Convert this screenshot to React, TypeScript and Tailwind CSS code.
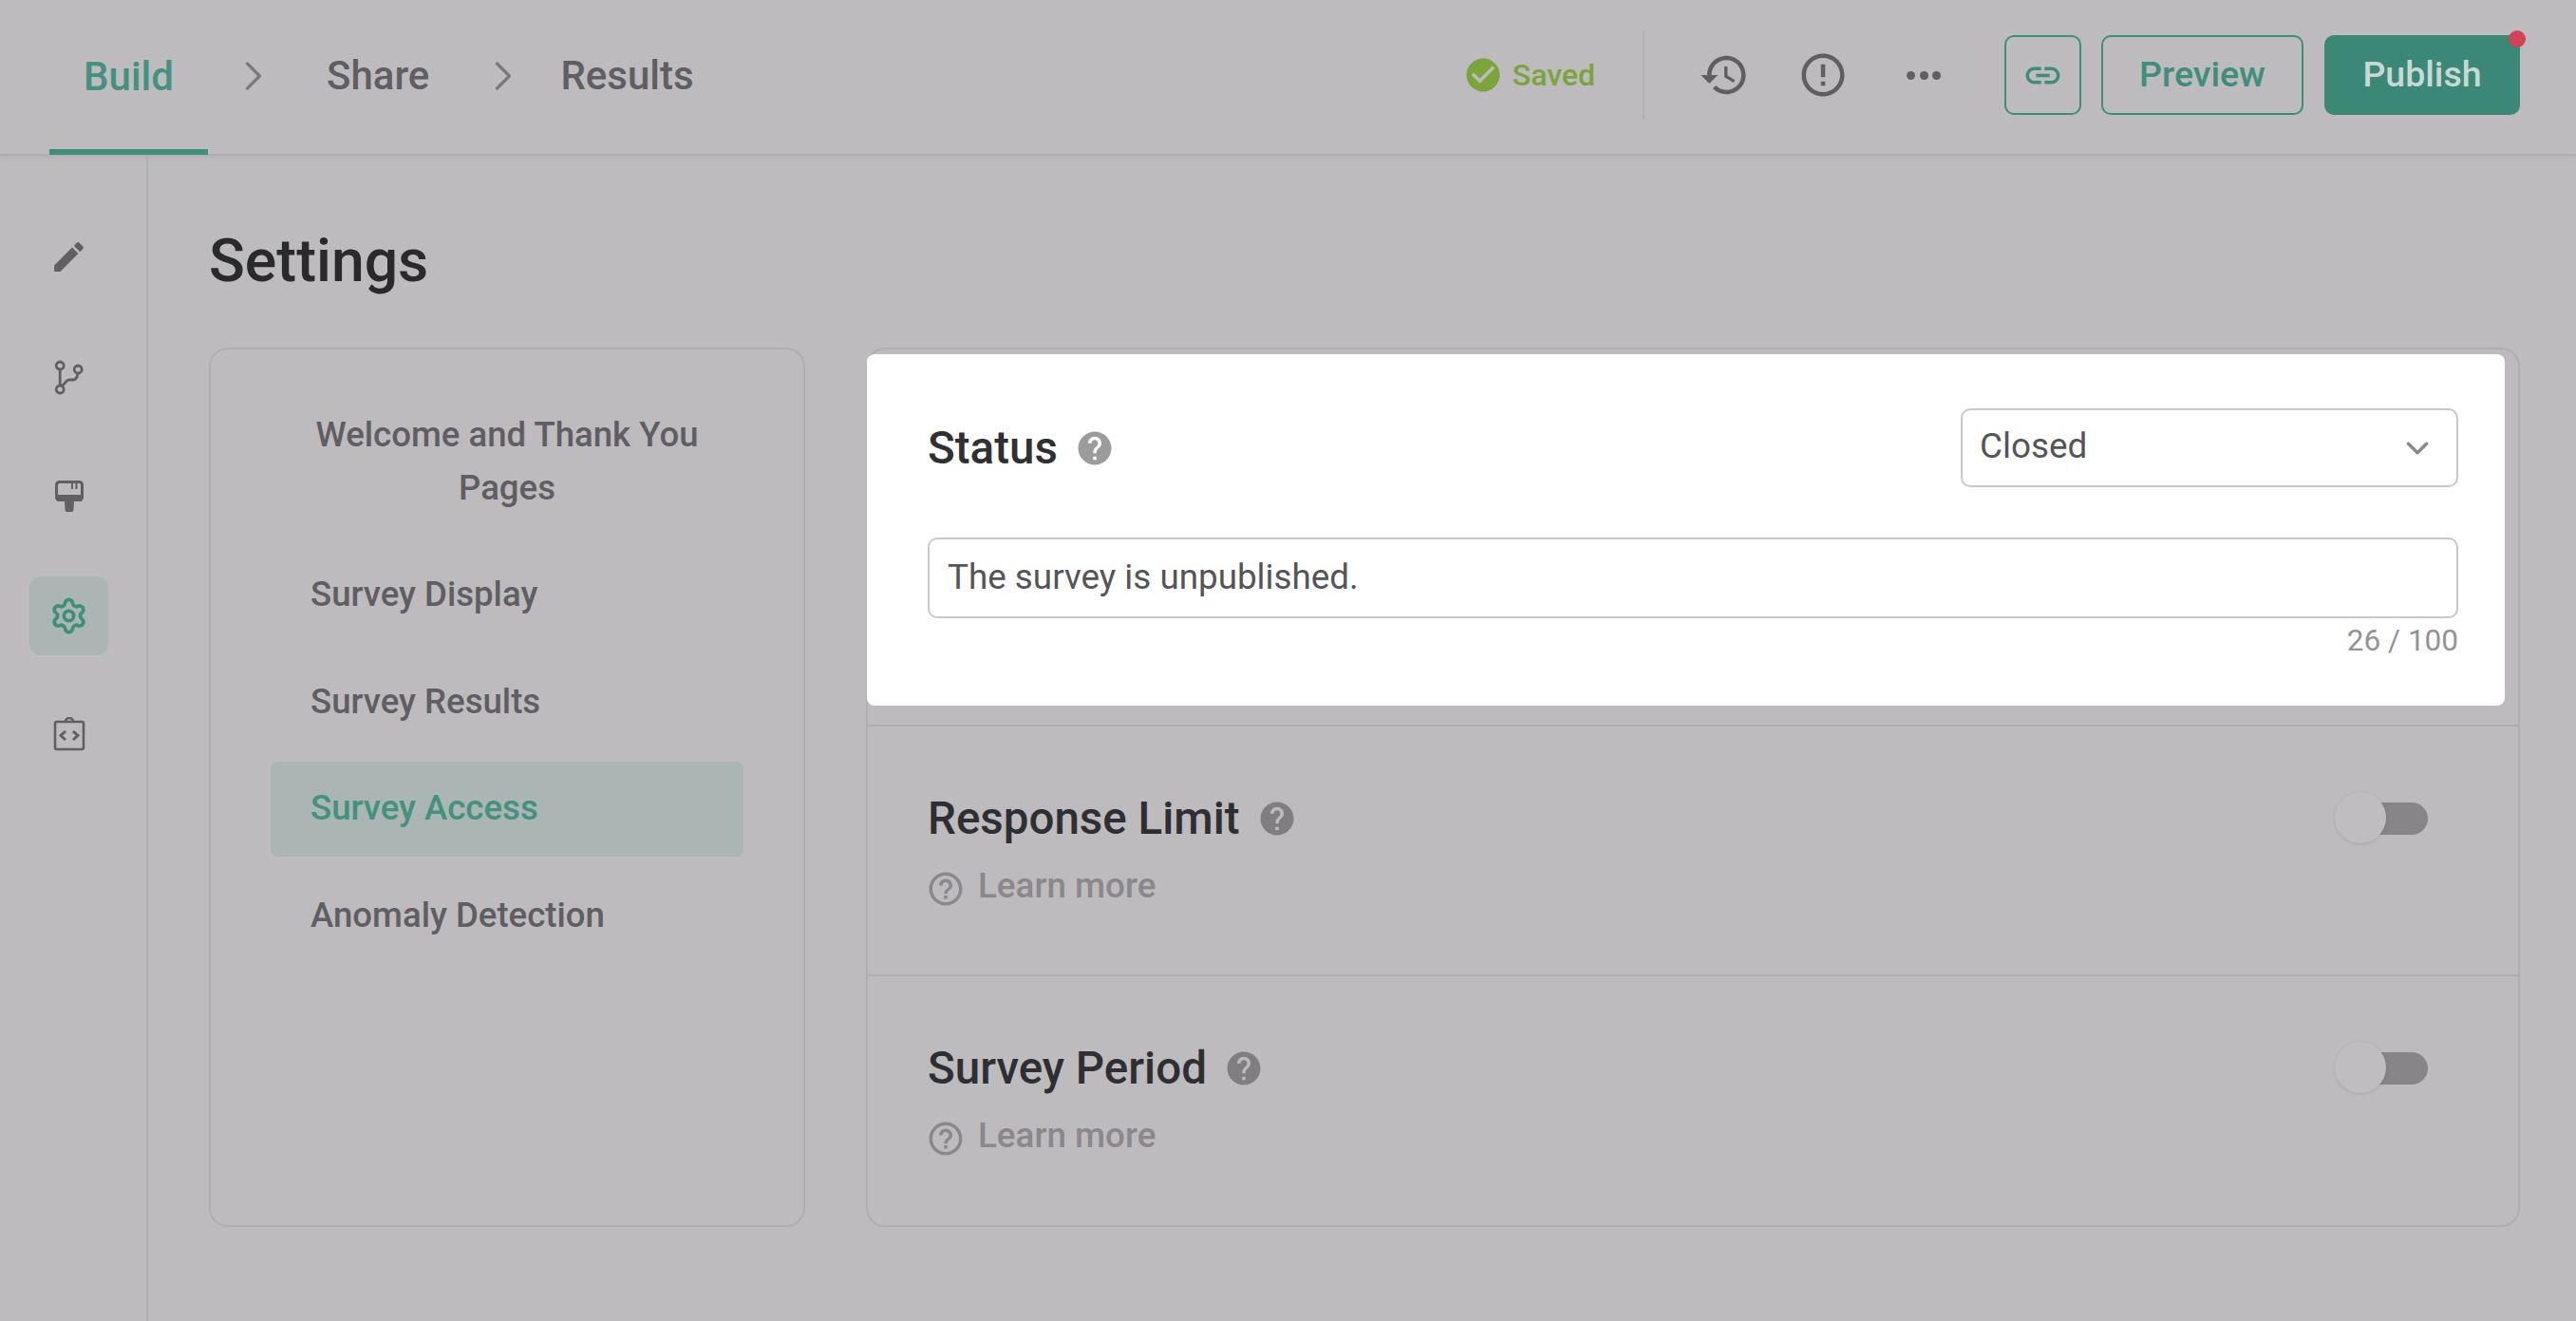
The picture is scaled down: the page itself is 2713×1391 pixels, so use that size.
import { ChevronDown, ChevronRight, Settings } from "lucide-react"

const MUI = {
  edit: "M3 17.25V21h3.75L17.81 9.94l-3.75-3.75L3 17.25zM20.71 7.04c.39-.39.39-1.02 0-1.41l-2.34-2.34c-.39-.39-1.02-.39-1.41 0l-1.83 1.83 3.75 3.75 1.83-1.83z",
  history: "M13 3c-4.97 0-9 4.03-9 9H1l3.89 3.89.07.14L9 12H6c0-3.87 3.13-7 7-7s7 3.13 7 7-3.13 7-7 7c-1.93 0-3.68-.79-4.94-2.06l-1.42 1.42C8.27 19.99 10.51 21 13 21c4.97 0 9-4.03 9-9s-4.03-9-9-9zm-1 5v5l4.28 2.54.72-1.21-3.5-2.08V8H12z",
  alert: "M11 15h2v2h-2zm0-8h2v6h-2zm.99-5C6.47 2 2 6.48 2 12s4.47 10 9.99 10C17.52 22 22 17.52 22 12S17.52 2 11.99 2zM12 20c-4.42 0-8-3.58-8-8s3.58-8 8-8 8 3.58 8 8-3.58 8-8 8z",
  check: "M12 2C6.48 2 2 6.48 2 12s4.48 10 10 10 10-4.48 10-10S17.52 2 12 2zm-2 15l-5-5 1.41-1.41L10 14.17l7.59-7.59L19 8l-9 9z",
  link: "M3.9 12c0-1.71 1.39-3.1 3.1-3.1h4V7H7c-2.76 0-5 2.24-5 5s2.24 5 5 5h4v-1.9H7c-1.71 0-3.1-1.39-3.1-3.1zM8 13h8v-2H8v2zm9-6h-4v1.9h4c1.71 0 3.1 1.39 3.1 3.1s-1.39 3.1-3.1 3.1h-4V17h4c2.76 0 5-2.24 5-5s-2.24-5-5-5z",
  help: "M12 2C6.48 2 2 6.48 2 12s4.48 10 10 10 10-4.48 10-10S17.52 2 12 2zm1 17h-2v-2h2v2zm2.07-7.75l-.9.92C13.45 12.9 13 13.5 13 15h-2v-.5c0-1.1.45-2.1 1.17-2.83l1.24-1.26c.37-.36.59-.86.59-1.41 0-1.1-.9-2-2-2s-2 .9-2 2H8c0-2.21 1.79-4 4-4s4 1.79 4 4c0 .88-.36 1.68-.93 2.25z",
  helpOutline: "M11 18h2v-2h-2v2zm1-16C6.48 2 2 6.48 2 12s4.48 10 10 10 10-4.48 10-10S17.52 2 12 2zm0 18c-4.41 0-8-3.59-8-8s3.59-8 8-8 8 3.59 8 8-3.59 8-8 8zm0-14c-2.21 0-4 1.79-4 4h2c0-1.1.9-2 2-2s2 .9 2 2c0 2-3 1.75-3 5h2c0-2.25 3-2.5 3-5 0-2.21-1.79-4-4-4z",
}

const Icon = ({ d, size, className }: { d: string; size: number; className?: string }) => (
  <svg width={size} height={size} viewBox="0 0 24 24" fill="currentColor" className={className}>
    <path d={d} fillRule="evenodd" />
  </svg>
)

const BranchIcon = () => (
  <svg width="34" height="38" viewBox="0 0 34 38" fill="none" stroke="#605f63" strokeWidth="2.8">
    <circle cx="7.2" cy="7" r="4" />
    <circle cx="7.2" cy="32" r="4" />
    <circle cx="26.2" cy="11" r="4" />
    <path d="M7.2 11v17M9 29l5-5.5c1-1 2-1.5 3-1.5h4c2.5 0 4.5-3 5-7" />
  </svg>
)

const BrushIcon = () => (
  <svg width="30" height="33" viewBox="0 0 30 33" className="text-[#605f63]">
    <rect x="1.5" y="1.5" width="27" height="19" rx="3" fill="none" stroke="currentColor" strokeWidth="3" />
    <path d="M1.5 15h27v5a2 2 0 0 1-2 2h-23a2 2 0 0 1-2-2z" fill="currentColor" />
    <path d="M17 2h2v7h-2zM21.5 2h2v7h-2z" fill="currentColor" />
    <path d="M10 22h10l-.6 9a2 2 0 0 1-2 2h-4.800a2 2 0 0 1-2-2z" fill="currentColor" />
  </svg>
)

const CodeIcon = () => (
  <svg width="34" height="36" viewBox="0 0 34 36" fill="none" stroke="#605f63" strokeWidth="2.6" className="mb-[3px]">
    <rect x="2" y="5" width="30" height="29" rx="2" />
    <path d="M13 5a4 4 0 0 1 8 0" />
    <path d="M13 15l-5 4.500 5 4.500M21 15l5 4.500-5 4.500" strokeWidth="3" />
  </svg>
)

const Toggle = () => (
  <div className="relative flex h-[56px] w-[98px] items-center justify-end">
    <div className="h-[34px] w-[80px] rounded-full bg-[#878588]" />
    <div className="absolute left-0 top-0 h-[54px] w-[54px] rounded-full bg-[#bfbdc0] shadow-[0_1px_4px_rgba(0,0,0,0.1)]" />
  </div>
)

const LimitRow = ({ title, last }: { title: string; last?: boolean }) => (
  <div className={`h-[263px] pl-[63px] pr-[95px] pt-[67px] ${last ? "" : "border-b-2 border-[#afadb0]"}`}>
    <div className="flex h-[60px] items-center justify-between">
      <div className="flex items-center">
        <span className="text-[47.5px] font-medium leading-[60px] text-[#2f2e32]">{title}</span>
        <Icon d={MUI.help} size={42} className="ml-[18px] text-[#807e81]" />
      </div>
      <Toggle />
    </div>
    <div className="mt-[16px] flex h-[50px] items-center">
      <Icon d={MUI.helpOutline} size={42} className="ml-[-2px] mt-[5px] text-[#8a888b]" />
      <span className="ml-[13px] text-[36.8px] font-medium leading-[50px] text-[#8a888b]">Learn more</span>
    </div>
  </div>
)

const navItems = ["Survey Display", "Survey Results", "Survey Access", "Anomaly Detection"]

export default function App() {
  return (
    <div className="flex h-[1391px] w-full flex-col overflow-hidden bg-[#bdbbbe] font-['Roboto',sans-serif]">
      <header className="flex h-[164px] shrink-0 items-stretch border-b-2 border-[#b0aeb1] pl-[52px] pr-[59px] shadow-[0_2px_5px_rgba(0,0,0,0.05)]">
        <div className="flex h-[163px] w-[167px] items-center justify-center border-b-[6px] border-[#3f8d7b] pt-[4px] text-[42px] font-medium text-[#45917f]">
          Build
        </div>
        <div className="flex items-center pb-[3px] text-[42px] font-medium text-[#5f5e62]">
          <ChevronRight size={52} strokeWidth={1.5} className="ml-[22px] text-[#7b797d]" />
          <span className="ml-[51px]">Share</span>
          <ChevronRight size={52} strokeWidth={1.5} className="ml-[52px] text-[#7b797d]" />
          <span className="ml-[34px]">Results</span>
        </div>
        <div className="ml-auto flex items-center pb-[4px]">
          <Icon d={MUI.check} size={42} className="text-[#7ba43c]" />
          <span className="ml-[10px] text-[32px] font-medium text-[#7ba43c]">Saved</span>
          <div className="ml-[50px] h-[94px] w-[2px] bg-[#b3b1b4]" />
          <Icon d={MUI.history} size={54} className="ml-[57px] text-[#5f5e62]" />
          <Icon d={MUI.alert} size={54} className="ml-[50px] text-[#5f5e62]" />
          <div className="ml-[61px] flex w-[36px] justify-between">
            <span className="h-[9px] w-[9px] rounded-full bg-[#5f5e62]" />
            <span className="h-[9px] w-[9px] rounded-full bg-[#5f5e62]" />
            <span className="h-[9px] w-[9px] rounded-full bg-[#5f5e62]" />
          </div>
          <div className="ml-[67px] flex h-[84px] w-[81px] items-center justify-center rounded-[10px] border-2 border-[#3f8d7b]">
            <Icon d={MUI.link} size={43} className="text-[#3f8d7b]" />
          </div>
          <div className="ml-[21px] flex h-[84px] w-[213px] items-center justify-center rounded-[10px] border-2 border-[#3f8d7b] pb-[2px] text-[37.5px] font-medium text-[#3f8d7b]">
            Preview
          </div>
          <div className="relative ml-[22px] flex h-[84px] w-[206px] items-center justify-center rounded-[10px] bg-[#3c8877] pb-[2px] text-[37.5px] font-medium text-[#c8d9d5]">
            Publish
            <span className="absolute right-[-6px] top-[-5px] h-[18px] w-[18px] rounded-full bg-[#d2435a]" />
          </div>
        </div>
      </header>

      <div className="flex flex-1">
        <aside className="flex w-[156px] shrink-0 flex-col gap-[43px] border-r-2 border-[#afadb0] pl-[31px] pt-[65px]">
          <div className="flex h-[83px] w-[83px] items-center justify-center">
            <Icon d={MUI.edit} size={41} className="text-[#605f63]" />
          </div>
          <div className="flex h-[83px] w-[83px] items-center justify-center">
            <BranchIcon />
          </div>
          <div className="flex h-[83px] w-[83px] items-center justify-center">
            <BrushIcon />
          </div>
          <div className="flex h-[83px] w-[83px] items-center justify-center rounded-[12px] bg-[#aab5b4]">
            <Settings size={41} strokeWidth={2.2} className="text-[#3f8d7b]" />
          </div>
          <div className="flex h-[83px] w-[83px] items-center justify-center">
            <CodeIcon />
          </div>
        </aside>

        <main className="flex-1 pl-[64px] pr-[59px] pt-[75px]">
          <h1 className="mb-[55px] h-[72px] text-[62.5px] font-medium leading-[72px] text-[#2a292c]">Settings</h1>
          <div className="flex items-stretch justify-between">
            <nav className="h-[926px] w-[628px] rounded-[20px] border-2 border-[#b0aeb1] px-[63px] pt-[40px]">
              <div className="flex h-[156px] items-center justify-center text-center text-[36.6px] font-medium leading-[56px] text-[#5f5e62]">
                Welcome and Thank You Pages
              </div>
              {navItems.map((item) => {
                const active = item === "Survey Access"
                return (
                  <div
                    key={item}
                    className={`mt-[12.5px] flex h-[100px] items-center rounded-[8px] pl-[42px] text-[36.6px] font-medium ${
                      active ? "bg-[#aab5b4] text-[#44917f]" : "text-[#5f5e62]"
                    }`}
                  >
                    {item}
                  </div>
                )
              })}
            </nav>

            <section className="h-[926px] w-[1742px] rounded-[20px] border-2 border-[#b0aeb1]">
              <div className="h-[397px] border-b-2 border-[#afadb0] pt-[5px] pr-[14px]">
                <div className="ml-[-1px] h-[370px] rounded-[8px] bg-white pl-[64px] pr-[49px] pt-[57px]">
                  <div className="flex h-[83px] items-center justify-between">
                    <div className="flex items-center">
                      <span className="text-[47.5px] font-medium leading-[60px] text-[#303033]">Status</span>
                      <Icon d={MUI.help} size={42} className="ml-[18px] text-[#9d9b9e]" />
                    </div>
                    <div className="flex h-[83px] w-[524px] items-center justify-between rounded-[10px] border-2 border-[#c9c7ca] pb-[4px] pl-[18px] pr-[22px]">
                      <span className="text-[36.8px] leading-[50px] text-[#555458]">Closed</span>
                      <ChevronDown size={38} strokeWidth={2.2} className="mt-[4px] text-[#8a888b]" />
                    </div>
                  </div>
                  <div className="mt-[53px] flex h-[85px] items-center rounded-[10px] border-2 border-[#c9c7ca] pb-[2px] pl-[19px] text-[36.8px] text-[#555458]">
                    The survey is unpublished.
                  </div>
                  <div className="mt-[5px] text-right text-[31.5px] leading-[38px] text-[#949295]">26 / 100</div>
                </div>
              </div>
              <LimitRow title="Response Limit" />
              <LimitRow title="Survey Period" last />
            </section>
          </div>
        </main>
      </div>
    </div>
  )
}
